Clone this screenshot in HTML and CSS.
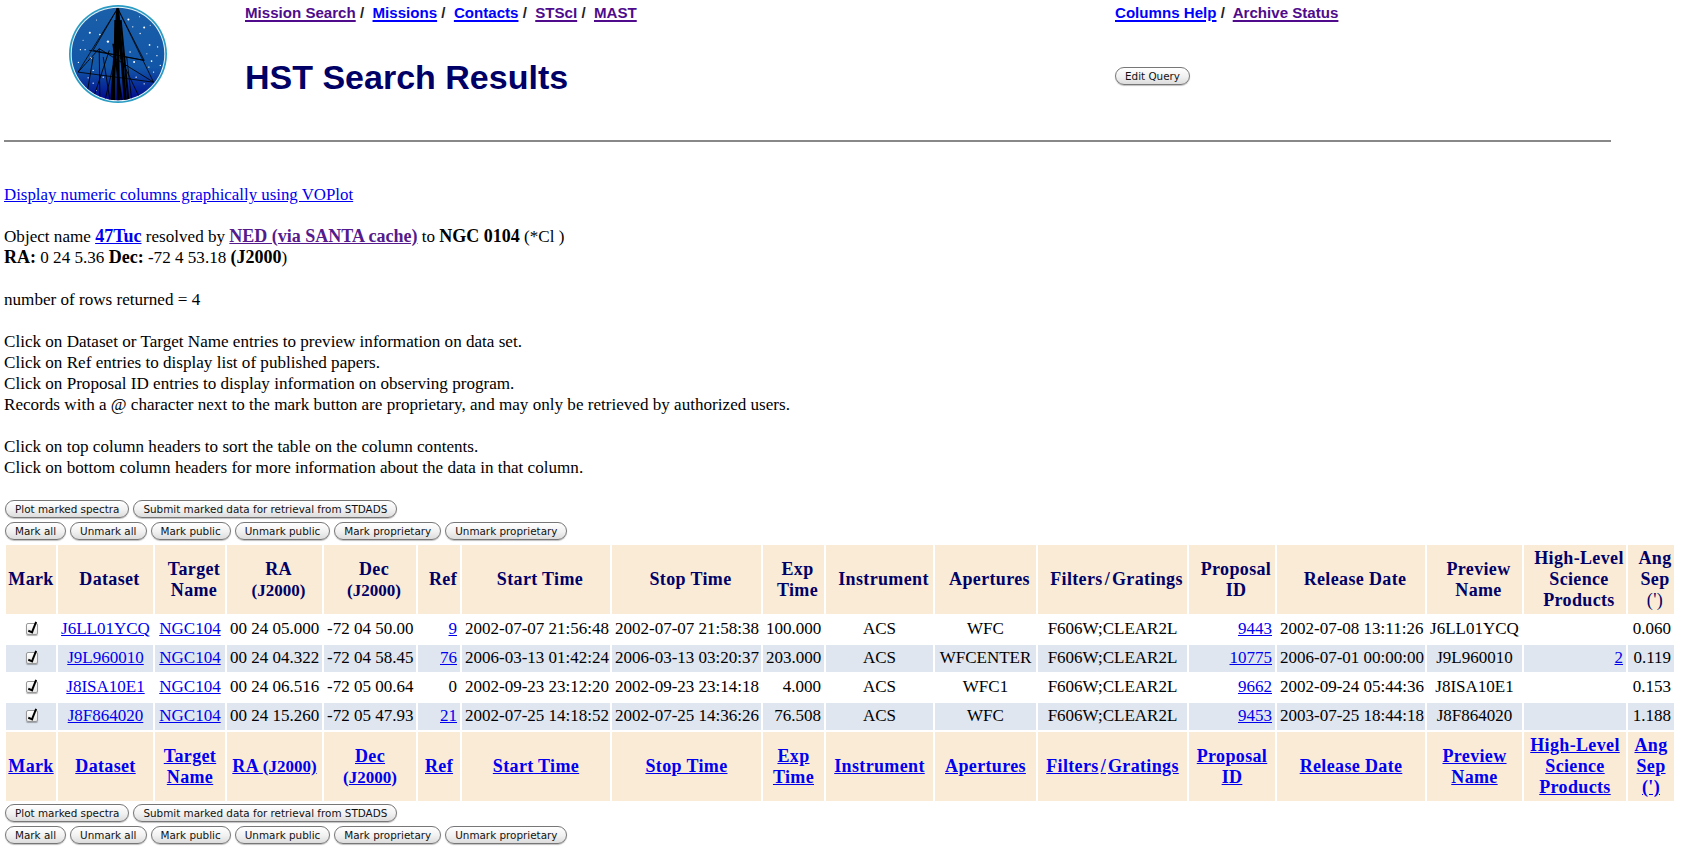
FILE: index.html
```html
<!DOCTYPE html>
<html lang="en">
<head>
<meta charset="utf-8">
<title>HST Search Results</title>
<link rel="stylesheet" href="styles.css">
</head>
<body>
<header class="top">
  <svg class="logo" viewBox="58 15 292 292" aria-label="MAST logo">
    <defs>
      <linearGradient id="sky" x1="0" y1="0" x2="0" y2="1">
        <stop offset="0" stop-color="#1a5fa8"/>
        <stop offset="0.65" stop-color="#1256a8"/>
        <stop offset="1" stop-color="#00098c"/>
      </linearGradient>
      <clipPath id="disc"><circle cx="204" cy="161" r="138"/></clipPath>
    </defs>
    <circle cx="204" cy="161" r="146" fill="#2a9cc4"/>
    <circle cx="204" cy="161" r="141" fill="#e8f4f8"/>
    <circle cx="204" cy="161" r="138" fill="url(#sky)"/>
    <g fill="#fff">
      <circle cx="235" cy="58" r="3"/><circle cx="282" cy="82" r="3"/><circle cx="120" cy="98" r="3"/>
      <circle cx="174" cy="124" r="3.5"/><circle cx="150" cy="103" r="2.5"/><circle cx="248" cy="80" r="2"/>
      <circle cx="270" cy="100" r="2"/><circle cx="298" cy="134" r="2.5"/><circle cx="92" cy="148" r="2"/>
      <circle cx="106" cy="148" r="2"/><circle cx="124" cy="172" r="3"/><circle cx="86" cy="186" r="2"/>
      <circle cx="252" cy="185" r="3"/><circle cx="304" cy="182" r="2.5"/><circle cx="322" cy="140" r="2"/>
      <circle cx="320" cy="166" r="2"/><circle cx="330" cy="195" r="2"/><circle cx="296" cy="200" r="2"/>
      <circle cx="310" cy="215" r="2"/><circle cx="282" cy="250" r="2"/><circle cx="130" cy="210" r="2"/>
      <circle cx="160" cy="230" r="2"/><circle cx="115" cy="232" r="2"/><circle cx="130" cy="248" r="2"/>
      <circle cx="258" cy="230" r="2"/><circle cx="240" cy="155" r="2"/><circle cx="268" cy="50" r="1.5"/>
      <circle cx="140" cy="60" r="1.5"/><circle cx="300" cy="75" r="1.5"/><circle cx="322" cy="250" r="1.5"/>
      <circle cx="100" cy="120" r="1.5"/><circle cx="290" cy="160" r="1.5"/><circle cx="140" cy="270" r="1.5"/>
    </g>
    <g clip-path="url(#disc)" stroke="#000" fill="none">
      <path d="M203 25 L186 300 M203 25 L226 300 M203 25 L205 300" stroke-width="9"/>
      <path d="M203 25 L130 150 L282 180 L203 25 M203 25 L85 215 L310 245 L203 25" stroke-width="2.4"/>
      <path d="M118 150 L282 180 M148 145 L85 215 M148 145 L310 245 M148 145 L150 300 M130 170 L110 290 M178 150 L128 300 M230 170 L245 300 M210 170 L270 295 M196 170 L165 300 M160 170 L180 300" stroke-width="2.6"/>
      <path d="M196 60 L192 300 M212 60 L235 300 M190 130 L215 300" stroke-width="6"/>
    </g>
  </svg>
  <nav class="nav">
    <a class="visited" href="#">Mission Search</a>&nbsp;/&nbsp; <a href="#">Missions</a>&nbsp;/&nbsp; <a href="#">Contacts</a>&nbsp;/&nbsp; <a class="visited" href="#">STScI</a>&nbsp;/&nbsp; <a class="visited" href="#">MAST</a>
  </nav>
  <nav class="nav">
    <a href="#">Columns Help</a>&nbsp;/&nbsp; <a class="visited" href="#">Archive Status</a>
  </nav>
  <h1 class="title">HST Search Results</h1>
  <div class="edit"><button class="btn" type="button">Edit Query</button></div>
</header>
<hr class="rule">
<main>
  <p class="para voplot"><a class="link" href="#">Display numeric columns graphically using VOPlot</a></p>
  <p class="para">Object name <a class="link strong" href="#">47Tuc</a> resolved by <a class="link strong visited" href="#">NED (via SANTA cache)</a> to <b class="strong">NGC 0104</b> (*Cl )<br>
  <b class="strong">RA:</b> 0 24 5.36 <b class="strong">Dec:</b> -72 4 53.18 <b class="strong">(J2000</b>)</p>
  <p class="para">number of rows returned = 4</p>
  <p class="para">Click on Dataset or Target Name entries to preview information on data set.<br>
  Click on Ref entries to display list of published papers.<br>
  Click on Proposal ID entries to display information on observing program.<br>
  Records with a @ character next to the mark button are proprietary, and may only be retrieved by authorized users.</p>
  <p class="para last">Click on top column headers to sort the table on the column contents.<br>
  Click on bottom column headers for more information about the data in that column.</p>

  <div class="btnrow"><button class="btn" type="button">Plot marked spectra</button><button class="btn" type="button">Submit marked data for retrieval from STDADS</button></div>
  <div class="btnrow"><button class="btn" type="button">Mark all</button><button class="btn" type="button">Unmark all</button><button class="btn" type="button">Mark public</button><button class="btn" type="button">Unmark public</button><button class="btn" type="button">Mark proprietary</button><button class="btn" type="button">Unmark proprietary</button></div>

  <table class="results">
    <colgroup>
      <col class="c-mark"><col class="c-ds"><col class="c-tg"><col class="c-ra"><col class="c-dec"><col class="c-ref"><col class="c-start"><col class="c-stop"><col class="c-exp"><col class="c-ins"><col class="c-ap"><col class="c-fil"><col class="c-prop"><col class="c-rel"><col class="c-pre"><col class="c-hl"><col class="c-ang">
    </colgroup>
    <thead>
      <tr class="head sort">
        <th class="flat">Mark</th><th>Dataset</th><th>Target<br>Name</th><th>RA<br><span class="num">(J2000)</span></th><th>Dec<br><span class="num">(J2000)</span></th><th>Ref</th><th>Start Time</th><th>Stop Time</th><th>Exp<br>Time</th><th>Instrument</th><th>Apertures</th><th>Filters<span class="slash">/</span>Gratings</th><th>Proposal<br>ID</th><th>Release Date</th><th>Preview<br>Name</th><th>High-Level<br>Science<br>Products</th><th>Ang<br>Sep<br><span class="plain">(')</span></th>
      </tr>
    </thead>
    <tbody>
      <tr>
        <td class="ctr"><input class="check" type="checkbox" checked></td><td class="ctr"><a class="link" href="#">J6LL01YCQ</a></td><td class="ctr"><a class="link" href="#">NGC104</a></td><td class="ctr">00 24 05.000</td><td class="ctr">-72 04 50.00</td><td class="rgt"><a class="link" href="#">9</a></td><td class="ctr">2002-07-07 21:56:48</td><td class="ctr">2002-07-07 21:58:38</td><td class="rgt">100.000</td><td class="ctr">ACS</td><td class="ctr">WFC</td><td class="ctr">F606W;CLEAR2L</td><td class="rgt"><a class="link" href="#">9443</a></td><td class="ctr">2002-07-08 13:11:26</td><td class="ctr">J6LL01YCQ</td><td class="rgt"></td><td class="rgt">0.060</td>
      </tr>
      <tr class="alt">
        <td class="ctr"><input class="check" type="checkbox" checked></td><td class="ctr"><a class="link" href="#">J9L960010</a></td><td class="ctr"><a class="link" href="#">NGC104</a></td><td class="ctr">00 24 04.322</td><td class="ctr">-72 04 58.45</td><td class="rgt"><a class="link" href="#">76</a></td><td class="ctr">2006-03-13 01:42:24</td><td class="ctr">2006-03-13 03:20:37</td><td class="rgt">203.000</td><td class="ctr">ACS</td><td class="ctr">WFCENTER</td><td class="ctr">F606W;CLEAR2L</td><td class="rgt"><a class="link" href="#">10775</a></td><td class="ctr">2006-07-01 00:00:00</td><td class="ctr">J9L960010</td><td class="rgt"><a class="link" href="#">2</a></td><td class="rgt">0.119</td>
      </tr>
      <tr>
        <td class="ctr"><input class="check" type="checkbox" checked></td><td class="ctr"><a class="link" href="#">J8ISA10E1</a></td><td class="ctr"><a class="link" href="#">NGC104</a></td><td class="ctr">00 24 06.516</td><td class="ctr">-72 05 00.64</td><td class="rgt">0</td><td class="ctr">2002-09-23 23:12:20</td><td class="ctr">2002-09-23 23:14:18</td><td class="rgt">4.000</td><td class="ctr">ACS</td><td class="ctr">WFC1</td><td class="ctr">F606W;CLEAR2L</td><td class="rgt"><a class="link" href="#">9662</a></td><td class="ctr">2002-09-24 05:44:36</td><td class="ctr">J8ISA10E1</td><td class="rgt"></td><td class="rgt">0.153</td>
      </tr>
      <tr class="alt">
        <td class="ctr"><input class="check" type="checkbox" checked></td><td class="ctr"><a class="link" href="#">J8F864020</a></td><td class="ctr"><a class="link" href="#">NGC104</a></td><td class="ctr">00 24 15.260</td><td class="ctr">-72 05 47.93</td><td class="rgt"><a class="link" href="#">21</a></td><td class="ctr">2002-07-25 14:18:52</td><td class="ctr">2002-07-25 14:36:26</td><td class="rgt">76.508</td><td class="ctr">ACS</td><td class="ctr">WFC</td><td class="ctr">F606W;CLEAR2L</td><td class="rgt"><a class="link" href="#">9453</a></td><td class="ctr">2003-07-25 18:44:18</td><td class="ctr">J8F864020</td><td class="rgt"></td><td class="rgt">1.188</td>
      </tr>
    </tbody>
    <tfoot>
      <tr class="head">
        <th><a class="link" href="#">Mark</a></th><th><a class="link" href="#">Dataset</a></th><th><a class="link" href="#">Target<br>Name</a></th><th><a class="link" href="#">RA <span class="num">(J2000)</span></a></th><th><a class="link" href="#">Dec<br><span class="num">(J2000)</span></a></th><th><a class="link" href="#">Ref</a></th><th><a class="link" href="#">Start Time</a></th><th><a class="link" href="#">Stop Time</a></th><th><a class="link" href="#">Exp<br>Time</a></th><th><a class="link" href="#">Instrument</a></th><th><a class="link" href="#">Apertures</a></th><th><a class="link" href="#">Filters<span class="slash">/</span>Gratings</a></th><th><a class="link" href="#">Proposal<br>ID</a></th><th><a class="link" href="#">Release Date</a></th><th><a class="link" href="#">Preview<br>Name</a></th><th><a class="link" href="#">High-Level<br>Science<br>Products</a></th><th><a class="link" href="#">Ang<br>Sep<br>(')</a></th>
      </tr>
    </tfoot>
  </table>

  <div class="btnrow after"><button class="btn" type="button">Plot marked spectra</button><button class="btn" type="button">Submit marked data for retrieval from STDADS</button></div>
  <div class="btnrow"><button class="btn" type="button">Mark all</button><button class="btn" type="button">Unmark all</button><button class="btn" type="button">Mark public</button><button class="btn" type="button">Unmark public</button><button class="btn" type="button">Mark proprietary</button><button class="btn" type="button">Unmark proprietary</button></div>
</main>
</body>
</html>
```
FILE: styles.css
```css
html, body { background: #fff; }
body {
  margin: 0;
  padding: 0 4px;
  font-family: "Liberation Serif", "Times New Roman", serif;
  font-size: 17px;
  line-height: 21px;
  color: #000;
}
.top {
  display: grid;
  grid-template-columns: 241px 870px 1fr;
  grid-template-rows: 24px auto;
  height: 101px;
}
.logo {
  grid-row: 1 / span 2;
  width: 98px;
  height: 98px;
  margin: 5px 0 0 65px;
  display: block;
}
.nav {
  font-family: "Liberation Sans", Arial, sans-serif;
  font-size: 15.1px;
  font-weight: bold;
  line-height: 21px;
  padding-top: 2px;
  color: #222;
  white-space: nowrap;
}
.nav a {
  color: #0000ff;
  text-decoration-thickness: 2px;
  text-underline-offset: 2px;
}
.nav a.visited { color: #4f0b8c; }
.title {
  margin: 33px 0 0;
  font-family: "Liberation Sans", Arial, sans-serif;
  font-size: 34px;
  line-height: 40px;
  font-weight: bold;
  color: #000066;
}
.edit { margin-top: 43px; line-height: 0; }
.rule {
  width: 1607px;
  height: 2px;
  margin: 39px 0 42px;
  border: 0;
  background: #888;
}
.para { margin: 0 0 21px; font-size: 17.1px; }
.para.voplot { font-size: 16.85px; }
.para.last { margin-bottom: 22px; }
.link { color: #0000ee; }
.link.visited { color: #551a8b; }
.strong { font-weight: bold; font-size: 18px; }
.btnrow {
  display: flex;
  gap: 4px;
  height: 18px;
  margin: 0 0 4px 1px;
}
.btnrow.after { margin-top: 1px; }
.btn {
  height: 18px;
  padding: 0 9px 1px;
  border: 1px solid #777;
  border-radius: 9px;
  background: linear-gradient(#fff, #f1f1f1 55%, #dcdcdc);
  box-shadow: 0 1px 1px rgba(0, 0, 0, 0.25);
  font-family: "DejaVu Sans", Verdana, sans-serif;
  font-size: 10.4px;
  line-height: 14px;
  color: #111;
  white-space: nowrap;
}
.results {
  width: 1672px;
  table-layout: fixed;
  border-collapse: separate;
  border-spacing: 2px;
  margin-top: -1px;
}
.c-mark { width: 50px; }
.c-ds { width: 95px; }
.c-tg { width: 70px; }
.c-ra { width: 95px; }
.c-dec { width: 92px; }
.c-ref { width: 42px; }
.c-start { width: 148px; }
.c-stop { width: 149px; }
.c-exp { width: 61px; }
.c-ins { width: 107px; }
.c-ap { width: 101px; }
.c-fil { width: 149px; }
.c-prop { width: 86px; }
.c-rel { width: 148px; }
.c-pre { width: 95px; }
.c-hl { width: 102px; }
.c-ang { width: 46px; }
.head th {
  height: 69px;
  padding: 0;
  background: #faebd7;
  color: #000066;
  font-size: 18px;
  letter-spacing: 0.35px;
  text-align: center;
  vertical-align: middle;
  white-space: nowrap;
}
.head.sort th { padding-left: 8px; }
.head.sort th.flat { padding-left: 0; }
.head .plain { font-weight: normal; }
.head .num { font-size: 17px; letter-spacing: 0; }
.head .slash { margin: 0 2px; }
.results td {
  height: 25px;
  padding: 0 3px 2px;
  white-space: nowrap;
}
.alt td { background: #dfe6f0; }
.ctr { text-align: center; }
.rgt { text-align: right; }
.check {
  appearance: none;
  position: relative;
  display: inline-block;
  width: 12px;
  height: 12px;
  margin: 0 0 0 1px;
  border: 1px solid #999;
  border-radius: 2px;
  background: linear-gradient(#fff, #e8e8e8);
  box-shadow: 0 1px 1px rgba(0, 0, 0, 0.3);
  vertical-align: -1px;
}
.check::after {
  content: "";
  position: absolute;
  left: 3px;
  top: -3px;
  width: 3px;
  height: 10px;
  border: solid #000;
  border-width: 0 2px 2px 0;
  transform: rotate(22deg);
}
```
